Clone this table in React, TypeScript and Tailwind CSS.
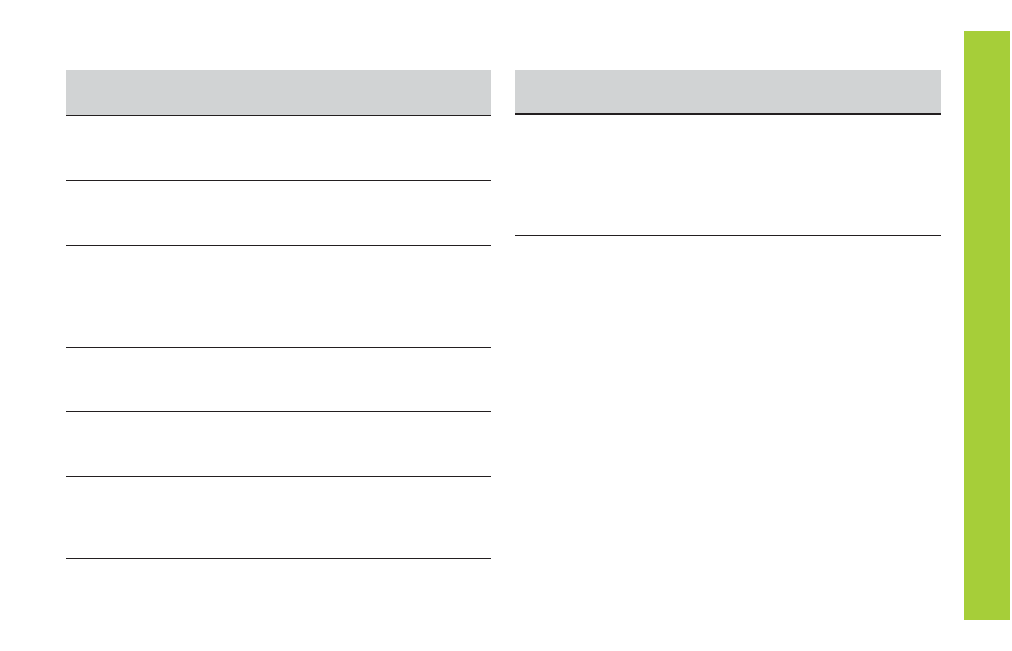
const leftRows = [65, 65, 102, 64, 65, 82];

export default function App() {
  return (
    <div className="flex w-[1012px] h-[651px] items-start bg-white font-['Liberation_Sans',sans-serif]">
      {/* left table */}
      <div className="ml-[66px] mt-[70px] w-[425px]">
        <div className="h-[46px] bg-[#d1d3d4] border-b border-[#231f20]" />
        {leftRows.map((h, i) => (
          <div key={i} className="border-b border-[#231f20]" style={{ height: h }} />
        ))}
      </div>

      {/* right table */}
      <div className="ml-[24px] mt-[70px] w-[426px]">
        <div className="h-[45px] bg-[#d1d3d4] border-b-2 border-[#231f20]" />
        <div className="h-[121px] border-b border-[#231f20]" />
      </div>

      {/* side tab */}
      <div className="ml-[23px] mt-[31px] w-[46px] h-[589px] bg-[#a6ce39]" />
    </div>
  );
}
